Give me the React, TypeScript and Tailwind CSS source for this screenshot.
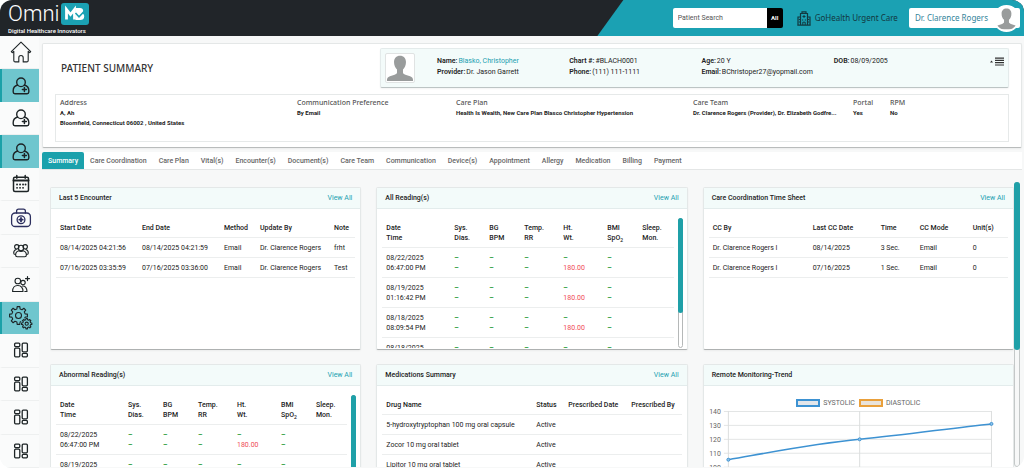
import type { ReactNode } from 'react'
import clsx from 'clsx'

type IconName = 'home' | 'patient' | 'calendar' | 'medkit' | 'group' | 'addUser' | 'gears' | 'tiles'

const MENU: { icon: IconName; label: string; active?: boolean }[] = [
  { icon: 'home', label: 'Home' },
  { icon: 'patient', label: 'Patient summary', active: true },
  { icon: 'patient', label: 'Patients' },
  { icon: 'patient', label: 'Patient list', active: true },
  { icon: 'calendar', label: 'Calendar' },
  { icon: 'medkit', label: 'Medical kit' },
  { icon: 'group', label: 'Groups' },
  { icon: 'addUser', label: 'Add user' },
  { icon: 'gears', label: 'Settings', active: true },
  { icon: 'tiles', label: 'Dashboard 1' },
  { icon: 'tiles', label: 'Dashboard 2' },
  { icon: 'tiles', label: 'Dashboard 3' },
  { icon: 'tiles', label: 'Dashboard 4' },
]

const TABS = [
  'Summary',
  'Care Coordination',
  'Care Plan',
  'Vital(s)',
  'Encounter(s)',
  'Document(s)',
  'Care Team',
  'Communication',
  'Device(s)',
  'Appointment',
  'Allergy',
  'Medication',
  'Billing',
  'Payment',
]

const PATIENT = [
  [
    { label: 'Name:', value: 'Blasko, Christopher', link: true },
    { label: 'Provider:', value: 'Dr. Jason Garrett' },
  ],
  [
    { label: 'Chart #:', value: '#BLACH0001' },
    { label: 'Phone:', value: '(111) 111-1111' },
  ],
  [
    { label: 'Age:', value: '20 Y' },
    { label: 'Email:', value: 'BChristoper27@yopmail.com' },
  ],
  [{ label: 'DOB:', value: '08/09/2005' }],
]

const INFO = [
  { title: 'Address', lines: ['A, Ah', 'Bloomfield, Connecticut 06002 , United States'] },
  { title: 'Communication Preference', lines: ['By Email'] },
  { title: 'Care Plan', lines: ['Health Is Wealth, New Care Plan Blasco Christopher Hypertension'] },
  { title: 'Care Team', lines: ['Dr. Clarence Rogers (Provider), Dr. Elizabeth Godfre...'] },
  { title: 'Portal', lines: ['Yes'] },
  { title: 'RPM', lines: ['No'] },
]

const READINGS = [
  ['08/22/2025', '06:47:00 PM'],
  ['08/19/2025', '01:16:42 PM'],
  ['08/18/2025', '08:09:54 PM'],
  ['08/18/2025', '07:58:12 PM'],
]

function gearPath(cx: number, cy: number, teeth: number, outer: number, inner: number) {
  const points: string[] = []
  const step = (Math.PI * 2) / teeth
  for (let i = 0; i < teeth; i++) {
    const a = i * step
    const corners: [number, number][] = [
      [inner, -0.3],
      [outer, -0.19],
      [outer, 0.19],
      [inner, 0.3],
    ]
    corners.forEach(([r, o]) => {
      points.push(`${(cx + r * Math.cos(a + o * step)).toFixed(2)} ${(cy + r * Math.sin(a + o * step)).toFixed(2)}`)
    })
  }
  return `M${points.join('L')}Z`
}

function MenuIcon({ name }: { name: IconName }) {
  const props = {
    className: 'h-[22px] w-[22px]',
    viewBox: '0 0 22 22',
    fill: 'none',
    stroke: 'currentColor',
    strokeLinecap: 'round' as const,
    strokeLinejoin: 'round' as const,
    'aria-hidden': true,
  }
  switch (name) {
    case 'home':
      return (
        <svg {...props} strokeWidth="1.1">
          <path d="M1.3 10.6 11 1.2l9.7 9.4-1 1.1-1.5-1.4v9.2c0 .9-.5 1.4-1.4 1.4h-3.6v-4.2a2.2 2.2 0 0 0-4.4 0v4.2H5.2c-.9 0-1.4-.5-1.4-1.4v-9.2l-1.5 1.4z" />
        </svg>
      )
    case 'patient':
      return (
        <svg {...props} strokeWidth="1.4">
          <circle cx="11" cy="7.3" r="4.3" />
          <path d="M7.6 10c-2.6.8-4.4 3-4.400 5.600v1.500c0 1 .7 1.700 1.700 1.700h12.200c1 0 1.700-.7 1.700-1.700v-1.500c0-2.600-1.800-4.800-4.400-5.600" />
          <path d="M14.400 12.400v4M12.400 14.400h4" strokeWidth="1.5" />
        </svg>
      )
    case 'calendar':
      return (
        <svg {...props} strokeWidth="1.5">
          <rect x="3.5" y="4.2" width="15" height="14.3" rx="1.5" />
          <path d="M3.500 7.600h15" strokeWidth="2" />
          <path d="M6.800 2.600v2.600M15.200 2.600v2.600" />
          <path d="M7 11.500h.1M10 11.500h.1M13 11.500h.1M15.500 11.500h.1M7 14.800h.1M10 14.800h.1M13 14.800h.1" strokeWidth="1.8" />
        </svg>
      )
    case 'medkit':
      return (
        <svg {...props} stroke="#2c2f5e" strokeWidth="1.3">
          <rect x="1.6" y="6" width="18.8" height="13.5" rx="3.6" />
          <path d="M6.600 6V4.200c0-1.200.8-2 2-2h4.800c1.200 0 2 .8 2 2V6" />
          <circle cx="11" cy="12.7" r="3.9" />
          <path d="M11 11v3.400M9.300 12.700h3.400" strokeWidth="1.8" />
        </svg>
      )
    case 'group':
      return (
        <svg {...props} strokeWidth="1.1">
          <circle cx="6.8" cy="6.8" r="2.2" />
          <circle cx="15.2" cy="6.8" r="2.2" />
          <circle cx="11" cy="8" r="2.7" />
          <path d="M6.200 9.500c-1.700.5-2.500 1.700-2.500 3.500 0 1 .4 1.500 1.600 1.500M15.800 9.500c1.700.5 2.500 1.700 2.500 3.500 0 1-.4 1.500-1.600 1.500" />
          <path d="M8.800 10.700c-2 .6-3.200 2.200-3.200 4.300 0 1.200.5 1.700 1.600 1.700h7.600c1.100 0 1.600-.5 1.600-1.700 0-2.100-1.200-3.700-3.200-4.300-.8 1-3.600 1-4.400 0z" />
        </svg>
      )
    case 'addUser':
      return (
        <svg {...props} strokeWidth="1.1">
          <circle cx="7.8" cy="7" r="2.8" />
          <circle cx="13" cy="8.6" r="2.2" />
          <path d="M2.600 17.500c0-3.800 2-6 5.200-6s5.200 2.200 5.200 6z" />
          <path d="M12.500 12c2.600-.2 4.500 1.800 4.500 5.500h-2.200" />
          <path d="M17.500 2.600v4M15.500 4.600h4" strokeWidth="1.2" />
        </svg>
      )
    case 'gears':
      return (
        <svg {...props} className="h-[26px] w-[26px]" viewBox="0 0 26 26" strokeWidth="1.1">
          <path d={gearPath(10.5, 10.5, 8, 9, 6.8)} />
          <circle cx="10.5" cy="10.5" r="3" />
          <circle cx="18.7" cy="18.7" r="6" fill="#6fc6ce" stroke="none" />
          <path d={gearPath(18.7, 18.7, 8, 5.2, 4)} />
          <circle cx="18.7" cy="18.7" r="1.6" />
        </svg>
      )
    case 'tiles':
      return (
        <svg {...props} strokeWidth="1.3">
          <rect x="4.6" y="4.2" width="5.2" height="3.4" rx="1" />
          <rect x="4.6" y="9.2" width="5.2" height="8.6" rx="1" />
          <rect x="12.2" y="4.2" width="5.2" height="8.6" rx="1" />
          <rect x="12.2" y="14.4" width="5.2" height="3.4" rx="1" />
        </svg>
      )
  }
}

function Silhouette({ className }: { className: string }) {
  return (
    <svg className={className} viewBox="0 0 30 30" fill="#999c9c" aria-hidden="true">
      <path d="M15 2c4 0 6.400 2.700 6.400 6.700 0 3.500-1.200 6.300-3.200 8v3c0 1.300 1 1.800 2.600 2.400l5 1.700c2.300.8 3.200 2 3.200 4.600V29H1v-.6c0-2.600.9-3.800 3.200-4.600l5-1.700c1.600-.6 2.600-1.100 2.600-2.400v-3c-2-1.700-3.200-4.500-3.200-8C8.600 4.700 11 2 15 2z" />
    </svg>
  )
}

function Header() {
  return (
    <header className="flex h-9 shrink-0 justify-between bg-[#212529]">
      <div className="flex flex-col pt-[3px] pl-2 text-white">
        <div className="flex h-[22px] items-center gap-0.5">
          <span className="text-[22px] leading-[22px] font-light">Omni</span>
          <svg className="h-[22px] w-7" viewBox="0 0 28 22" aria-label="MD">
            <rect width="28" height="22" rx="3" fill="#1ba1b3" />
            <path d="M5.500 16.500V6.500l4 5 4-5v10" fill="none" stroke="#fff" strokeWidth="2.8" />
            <path d="M14.500 5h4.500c2 0 3.200 1.200 3.200 3 0 1-.3 1.700-1 2.300 1.300.6 2 1.700 2 3.100 0 2.300-1.500 3.600-4 3.600h-4.700z" fill="#fff" />
            <path d="m14.500 10 3.500 3.800 6-6.300" fill="none" stroke="#1ba1b3" strokeWidth="1.6" />
          </svg>
        </div>
        <span className="mt-px text-[6px] leading-[10px] font-medium">Digital Healthcare Innovators</span>
      </div>

      <div className="flex w-5/12 items-center justify-end bg-[#1ba1b3] pr-1 [clip-path:polygon(26px_0,100%_0,100%_100%,0_100%)]">
        <form className="mr-[14px] flex h-5">
          <input
            aria-label="Patient Search"
            placeholder="Patient Search"
            className="w-[94px] rounded-l-xs bg-white px-[5px] text-[7px] placeholder:text-[#555]"
          />
          <button type="button" className="w-4 rounded-r-xs bg-black text-[6px] font-bold text-white">
            All
          </button>
        </form>
        <svg className="mr-1 h-[15px] w-[14px]" viewBox="0 0 14 15" fill="none" stroke="#12383f" aria-hidden="true">
          <path d="M3.500 14V2.500h7V14M1 14V6h2.500M13 14V6h-2.500M.3 14.200h13.400M5 .8h4v1.700H5z" strokeWidth="1.2" />
          <path d="M7 4v3M5.500 5.500h3M5 9h1.200M7.800 9H9M5.800 14v-2.800h2.400V14M1.800 8.500H3M1.800 11H3M11 8.500h1.200M11 11h1.200" />
        </svg>
        <span className="mr-[11px] font-[Noto_Sans] text-[8px] text-[#12383f]">GoHealth Urgent Care</span>
        <button type="button" className="flex h-5 items-center rounded-xs bg-white pl-1.5 text-[#33849a]">
          <span className="mr-[5px] font-[Noto_Sans] text-[8px]">Dr. Clarence Rogers</span>
          <span className="flex size-[27px] items-end justify-center overflow-hidden rounded-full border-2 border-white bg-white">
            <Silhouette className="size-[23px]" />
          </span>
        </button>
      </div>
    </header>
  )
}

function Sidebar() {
  return (
    <nav className="flex w-[39px] shrink-0 flex-col bg-[#fafbfb] text-[#1d2426]">
      {MENU.map((item) => (
        <a
          key={item.label}
          href="#"
          aria-label={item.label}
          className={clsx(
            'flex min-h-0 flex-1 items-center justify-center border-l-2',
            item.active ? 'border-l-[#1ba1a8] bg-[#6fc6ce]' : 'border-b border-b-[#eef0f0] border-l-transparent',
          )}
        >
          <MenuIcon name={item.icon} />
        </a>
      ))}
    </nav>
  )
}

function PatientSummary() {
  return (
    <section className="rounded-xs border border-[#e4e7e7] border-b-[#b9bcbc] bg-white px-3 pt-1 pb-[5px] shadow-xs">
      <div className="flex items-center">
        <h1 className="w-[325px] shrink-0 pl-1.5 font-[Noto_Sans] text-[10px] font-medium text-[#333]">PATIENT SUMMARY</h1>
        <div className="flex h-10 flex-1 items-start rounded-xs border border-[#e4ebeb] border-b-[#bcc4c4] bg-[#f3fbfa] p-1 shadow-xs">
          <div className="size-[30px] shrink-0 rounded-xs border border-[#e0e3e3] bg-white">
            <Silhouette className="size-7" />
          </div>
          <div className="grid flex-1 grid-cols-4 pt-[3px] pr-6 pl-[22px]">
            {PATIENT.map((col, i) => (
              <dl key={i} className="whitespace-nowrap">
                {col.map((f) => (
                  <div key={f.label} className="flex gap-px leading-[11px]">
                    <dt className="font-semibold">{f.label}</dt>
                    <dd className={clsx(f.link && 'text-[#1b9fb1]')}>{f.value}</dd>
                  </div>
                ))}
              </dl>
            ))}
          </div>
          <button type="button" aria-label="Patient menu" className="pt-1">
            <svg className="h-[9px] w-[14px]" viewBox="0 0 14 9" fill="#333" aria-hidden="true">
              <path d="M0 5.500 1.500 3.500 3 5.500zM5 .5h9v1.200H5zM5 2.800h9V4H5zM5 5.100h9v1.200H5zM5 7.400h9v1.200H5z" />
            </svg>
          </button>
        </div>
      </div>

      <div className="mt-[6px] grid h-12 grid-cols-[237fr_159fr_237fr_160fr_37fr_118fr] border border-[#e6e9e9] pt-[3px] pl-1">
        {INFO.map((col) => (
          <div key={col.title} className="min-w-0 leading-[10px] whitespace-nowrap">
            <h2 className="font-[Noto_Sans] font-medium text-[#555]">{col.title}</h2>
            {col.lines.map((line) => (
              <p key={line} className="text-[6px] font-bold">
                {line}
              </p>
            ))}
          </div>
        ))}
      </div>
    </section>
  )
}

function Tabs() {
  return (
    <div role="tablist" className="mt-1 flex h-[18px] border-b border-[#e4e6e6] bg-white">
      {TABS.map((tab, i) => (
        <button
          key={tab}
          type="button"
          role="tab"
          aria-selected={i === 0}
          className={clsx('px-1.5 font-medium', i === 0 ? 'rounded-t-xs bg-[#1ba1ac] text-white' : 'text-[#666]')}
        >
          {tab}
        </button>
      ))}
    </div>
  )
}

function Card({ title, viewAll = true, children }: { title: string; viewAll?: boolean; children: ReactNode }) {
  return (
    <section className="flex h-[163px] min-w-0 flex-col overflow-hidden rounded-xs border border-[#e4e8e8] border-b-[#aeb1b1] bg-white shadow-xs">
      <header className="flex h-[21px] shrink-0 items-center justify-between border-b border-[#e3ecec] bg-[#f3fbfa] px-2">
        <h2 className="font-medium">{title}</h2>
        {viewAll && (
          <a href="#" className="text-[#1b9fb1]">
            View All
          </a>
        )}
      </header>
      {children}
    </section>
  )
}

type Column = { label: string; width: string }

function DataTable({ columns, rows }: { columns: Column[]; rows: string[][] }) {
  return (
    <div className="px-[5px] pt-[9px]">
      <table className="w-full table-fixed border-separate border-spacing-0 text-left whitespace-nowrap">
        <thead>
          <tr className="h-5">
            {columns.map((c) => (
              <th key={c.label} className={clsx('border-b border-[#eceeee] pl-1 font-medium', c.width)}>
                {c.label}
              </th>
            ))}
          </tr>
        </thead>
        <tbody>
          {rows.map((row, i) => (
            <tr key={i} className="h-5">
              {row.map((cell, j) => (
                <td key={j} className="border-b border-[#eceeee] pl-1">
                  {cell}
                </td>
              ))}
            </tr>
          ))}
        </tbody>
      </table>
    </div>
  )
}

const READING_COLUMNS: { top: string; bottom: ReactNode; width: string }[] = [
  { top: 'Date', bottom: 'Time', width: 'w-[68px]' },
  { top: 'Sys.', bottom: 'Dias.', width: 'w-[35px]' },
  { top: 'BG', bottom: 'BPM', width: 'w-[35px]' },
  { top: 'Temp.', bottom: 'RR', width: 'w-[39px]' },
  { top: 'Ht.', bottom: 'Wt.', width: 'w-[44px]' },
  { top: 'BMI', bottom: <>SpO<sub className="bottom-[-2px] text-[5px]">2</sub></>, width: 'w-[35px]' },
  { top: 'Sleep.', bottom: 'Mon.', width: 'w-auto' },
]

function ReadingsTable() {
  return (
    <div className="flex min-h-0 flex-1 pt-[9px] pr-1 pb-px pl-[5px]">
      <div className="min-w-0 flex-1 overflow-hidden">
        <table className="w-full table-fixed border-separate border-spacing-0 text-left leading-[10px] whitespace-nowrap">
          <thead>
            <tr className="h-[30px]">
              {READING_COLUMNS.map((c) => (
                <th key={c.top} className={clsx('border-b border-[#eceeee] pl-1 font-medium', c.width)}>
                  {c.top}
                  <br />
                  {c.bottom}
                </th>
              ))}
            </tr>
          </thead>
          <tbody>
            {READINGS.map(([date, time]) => (
              <tr key={date + time} className="h-[30px]">
                <td className="border-b border-[#eceeee] pl-1">
                  {date}
                  <br />
                  {time}
                </td>
                {[0, 1, 2, 3, 4].map((n) => (
                  <td key={n} className="border-b border-[#eceeee] pl-1 font-bold text-[#2f9e44]">
                    –
                    <br />
                    {n === 3 ? <span className="font-normal text-[#ef4b55]">180.00</span> : '–'}
                  </td>
                ))}
                <td className="border-b border-[#eceeee]" />
              </tr>
            ))}
          </tbody>
        </table>
      </div>
      <div className="ml-1 w-[5px] rounded-full border border-[#b5b8b8]">
        <div className="-m-px h-[95px] rounded-full bg-[#1fa0a8]" />
      </div>
    </div>
  )
}

function TrendChart() {
  return (
    <>
      <div className="mt-[13px] flex h-2 items-center justify-center gap-[3px] text-[#666]">
        <span className="h-2 w-6 border-2 border-[#3d92d2] bg-[#e3e6ea]" />
        <span>SYSTOLIC</span>
        <span className="ml-px h-2 w-6 border-2 border-[#e9a03b] bg-[#e9e3da]" />
        <span>DIASTOLIC</span>
      </div>
      <svg className="mt-px w-full shrink-0" viewBox="0 0 311 90" aria-label="Systolic and diastolic trend">
        {[140, 130, 120, 110, 100].map((v, i) => (
          <g key={v}>
            <text x="17" y={6.5 + i * 14} textAnchor="end" fontSize="7" fill="#666">
              {v}
            </text>
            <path d={`M20 ${3.5 + i * 14}H289`} stroke="#e3e5e5" />
          </g>
        ))}
        <path d="M24.500 3v87M156.500 3v87M289 3v87" stroke="#dcdede" />
        <path d="M24.500 52C70 44 110 36 156.500 31.500S250 20 289 16" fill="none" stroke="#3d92d2" strokeWidth="1.5" />
        <g fill="#8fc3ea" stroke="#3d92d2">
          <circle cx="24.5" cy="52" r="1.5" />
          <circle cx="156.5" cy="31.5" r="1.5" />
          <circle cx="289" cy="16" r="1.5" />
        </g>
      </svg>
    </>
  )
}

export default function App() {
  return (
    <div className="flex h-screen flex-col overflow-hidden rounded-xl bg-[#f7f8f8] font-[Roboto,sans-serif] text-[7px] leading-[10px] text-[#222]">
      <Header />
      <div className="flex min-h-0 flex-1">
        <Sidebar />
        <main className="flex min-w-0 flex-1 flex-col pt-[7px] pr-0.5 pl-[3px]">
          <PatientSummary />
          <Tabs />
          <div className="mt-3 flex min-h-0 flex-1 overflow-hidden pb-px pl-2">
            <div className="grid flex-1 grid-cols-3 content-start gap-x-[15px] gap-y-[14px] overflow-hidden pt-[5px]">
              <Card title="Last 5 Encounter">
                <DataTable
                  columns={[
                    { label: 'Start Date', width: 'w-[82px]' },
                    { label: 'End Date', width: 'w-[82px]' },
                    { label: 'Method', width: 'w-[36px]' },
                    { label: 'Update By', width: 'w-[74px]' },
                    { label: 'Note', width: 'w-auto' },
                  ]}
                  rows={[
                    ['08/14/2025 04:21:56', '08/14/2025 04:21:59', 'Email', 'Dr. Clarence Rogers', 'frht'],
                    ['07/16/2025 03:35:59', '07/16/2025 03:36:00', 'Email', 'Dr. Clarence Rogers', 'Test'],
                  ]}
                />
              </Card>
              <Card title="All Reading(s)">
                <ReadingsTable />
              </Card>
              <Card title="Care Coordination Time Sheet">
                <DataTable
                  columns={[
                    { label: 'CC By', width: 'w-[100px]' },
                    { label: 'Last CC Date', width: 'w-[68px]' },
                    { label: 'Time', width: 'w-[39px]' },
                    { label: 'CC Mode', width: 'w-[53px]' },
                    { label: 'Unit(s)', width: 'w-auto' },
                  ]}
                  rows={[
                    ['Dr. Clarence Rogers I', '08/14/2025', '3 Sec.', 'Email', '0'],
                    ['Dr. Clarence Rogers I', '07/16/2025', '1 Sec.', 'Email', '0'],
                  ]}
                />
              </Card>
              <Card title="Abnormal Reading(s)">
                <ReadingsTable />
              </Card>
              <Card title="Medications Summary">
                <DataTable
                  columns={[
                    { label: 'Drug Name', width: 'w-[150px]' },
                    { label: 'Status', width: 'w-[32px]' },
                    { label: 'Prescribed Date', width: 'w-[63px]' },
                    { label: 'Prescribed By', width: 'w-auto' },
                  ]}
                  rows={[
                    ['5-hydroxytryptophan 100 mg oral capsule', 'Active', '', ''],
                    ['Zocor 10 mg oral tablet', 'Active', '', ''],
                    ['Lipitor 10 mg oral tablet', 'Active', '', ''],
                  ]}
                />
              </Card>
              <Card title="Remote Monitoring-Trend" viewAll={false}>
                <TrendChart />
              </Card>
            </div>
            <div className="mr-0.5 w-[6px] rounded-full border border-[#c4c8c8]">
              <div className="-m-px h-[168px] rounded-full bg-[#1fa0a8]" />
            </div>
          </div>
        </main>
      </div>
    </div>
  )
}
